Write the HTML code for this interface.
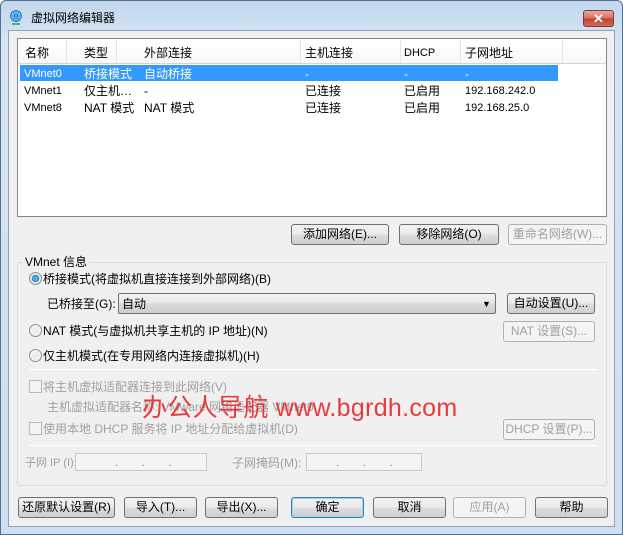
<!DOCTYPE html>
<html><head><meta charset="utf-8"><style>
*{margin:0;padding:0;box-sizing:border-box}
body{width:623px;height:535px;overflow:hidden;font-family:"Liberation Sans","Noto Sans CJK SC",sans-serif;font-size:12px;color:#000;background:#fff}
.win{position:absolute;left:0;top:0;width:623px;height:535px;background:linear-gradient(#c2d7ee,#d6e4f3 40px,#cfdff0);border:1px solid #58708c;border-radius:6px 6px 0 0}
.client{position:absolute;left:8px;top:30px;width:607px;height:497px;background:#f0f0f0;border:1px solid #8da2bb}
.a{position:absolute;white-space:nowrap;line-height:16px}
.btn{position:absolute;height:21px;border:1px solid #707070;border-radius:3px;background:linear-gradient(#f2f2f2,#ebebeb 50%,#dddddd 51%,#cfcfcf);text-align:center;line-height:19px;font-size:12px}
.dis{border-color:#adb2b5;background:#f4f4f4;color:#a0a0a0}
.gray{color:#a0a0a0}
.radio{position:absolute;width:13px;height:13px;border-radius:50%;border:1px solid #8e8f8f;background:radial-gradient(#e8e8e8,#f8f8f8)}
.chk{position:absolute;width:13px;height:13px;border:1px solid #b8b8b8;background:#f4f4f4}
.sep{position:absolute;height:1px;background:#a0a0a0;border-bottom:1px solid #fff}
.inp{position:absolute;height:18px;border:1px solid #c8c8c8;background:#f4f4f4}
.s{font-size:11px}
</style></head><body>
<div class="win">
<svg class="a" style="left:7px;top:8px" width="16" height="16" viewBox="0 0 16 16"><circle cx="8" cy="7" r="5.5" fill="#7ec0ea" stroke="#2a7fc0"/><path d="M2.5 7h11M8 1.5v11M5 3c2 2 2 6 0 8M11 3c-2 2-2 6 0 8" stroke="#2a7fc0" fill="none" stroke-width=".8"/><path d="M4 15h8" stroke="#1aa060" stroke-width="1.5"/></svg>
<div class="a" style="left:30px;top:9px;font-size:12px">虚拟网络编辑器</div>
<div class="a" style="left:582px;top:9px;width:31px;height:17px;border:1px solid #7a3b34;border-radius:3px;background:linear-gradient(#e8a99c,#d2705f 50%,#c2412c 51%,#d46a52);color:#fff;text-align:center;font-weight:bold;font-size:13px;line-height:15px">✕</div>
</div>
<div class="client"></div>
<div class="a" style="left:17px;top:38px;width:590px;height:179px;border:1px solid #828790;background:#fff"></div>
<div class="a" style="left:18px;top:39px;width:588px;height:25px;background:linear-gradient(#fff,#f7f8fa);border-bottom:1px solid #d5d5d5"></div>
<div class="a" style="left:66px;top:40px;width:1px;height:23px;background:#e3e5e7"></div>
<div class="a" style="left:116px;top:40px;width:1px;height:23px;background:#e3e5e7"></div>
<div class="a" style="left:300px;top:40px;width:1px;height:23px;background:#e3e5e7"></div>
<div class="a" style="left:400px;top:40px;width:1px;height:23px;background:#e3e5e7"></div>
<div class="a" style="left:460px;top:40px;width:1px;height:23px;background:#e3e5e7"></div>
<div class="a" style="left:562px;top:40px;width:1px;height:23px;background:#e3e5e7"></div>
<div class="a" style="left:25px;top:45px">名称</div><div class="a" style="left:84px;top:45px">类型</div><div class="a" style="left:144px;top:45px">外部连接</div><div class="a" style="left:305px;top:45px">主机连接</div><div class="a s" style="left:404px;top:45px">DHCP</div><div class="a" style="left:465px;top:45px">子网地址</div>
<div class="a" style="left:20px;top:65px;width:538px;height:16px;background:#3399ff"></div>
<div class="a s" style="left:24px;top:66px;color:#fff">VMnet0</div><div class="a" style="left:84px;top:66px;color:#fff">桥接模式</div><div class="a" style="left:144px;top:66px;color:#fff">自动桥接</div><div class="a" style="left:305px;top:66px;color:#fff">-</div><div class="a" style="left:404px;top:66px;color:#fff">-</div><div class="a" style="left:465px;top:66px;color:#fff">-</div>
<div class="a s" style="left:24px;top:83px">VMnet1</div><div class="a" style="left:84px;top:83px">仅主机…</div><div class="a" style="left:144px;top:83px">-</div><div class="a" style="left:305px;top:83px">已连接</div><div class="a" style="left:404px;top:83px">已启用</div><div class="a s" style="left:465px;top:83px">192.168.242.0</div>
<div class="a s" style="left:24px;top:100px">VMnet8</div><div class="a" style="left:84px;top:100px">NAT 模式</div><div class="a" style="left:144px;top:100px">NAT 模式</div><div class="a" style="left:305px;top:100px">已连接</div><div class="a" style="left:404px;top:100px">已启用</div><div class="a s" style="left:465px;top:100px">192.168.25.0</div>
<div class="btn" style="left:291px;top:224px;width:98px">添加网络(E)...</div>
<div class="btn" style="left:399px;top:224px;width:100px">移除网络(O)</div>
<div class="btn dis" style="left:508px;top:224px;width:99px">重命名网络(W)...</div>
<div class="a" style="left:17px;top:262px;width:590px;height:224px;border:1px solid #d5dfe5;border-radius:3px"></div>
<div class="a" style="left:23px;top:254px;background:#f0f0f0;padding:0 2px">VMnet 信息</div>
<div class="radio" style="left:29px;top:272px;background:radial-gradient(#4fb0f0 0 2px,#1a6fb8 3px,#e8e8e8 4px)"></div>
<div class="a" style="left:43px;top:271px">桥接模式(将虚拟机直接连接到外部网络)(B)</div>
<div class="a" style="left:47px;top:296px">已桥接至(G):</div>
<div class="a" style="left:118px;top:293px;width:378px;height:21px;border:1px solid #707070;border-radius:2px;background:linear-gradient(#f2f2f2,#e6e6e6 50%,#dadada 51%,#cfcfcf)"></div>
<div class="a" style="left:122px;top:296px">自动</div>
<div class="a" style="left:482px;top:296px;font-size:9px">▼</div>
<div class="btn" style="left:507px;top:293px;width:88px">自动设置(U)...</div>
<div class="radio" style="left:29px;top:324px"></div>
<div class="a" style="left:43px;top:323px">NAT 模式(与虚拟机共享主机的 IP 地址)(N)</div>
<div class="btn dis" style="left:503px;top:321px;width:92px">NAT 设置(S)...</div>
<div class="radio" style="left:29px;top:349px"></div>
<div class="a" style="left:43px;top:348px">仅主机模式(在专用网络内连接虚拟机)(H)</div>
<div class="sep" style="left:29px;top:369px;width:568px"></div>
<div class="chk" style="left:29px;top:380px"></div>
<div class="a gray" style="left:43px;top:379px">将主机虚拟适配器连接到此网络(V)</div>
<div class="a gray" style="left:47px;top:399px">主机虚拟适配器名称: VMware 网络适配器 VMnet0</div>
<div class="chk" style="left:29px;top:422px"></div>
<div class="a gray" style="left:43px;top:421px">使用本地 DHCP 服务将 IP 地址分配给虚拟机(D)</div>
<div class="btn dis" style="left:503px;top:419px;width:92px">DHCP 设置(P)...</div>
<div class="sep" style="left:29px;top:445px;width:568px"></div>
<div class="a gray" style="left:25px;top:455px;font-size:11px">子网 IP (I):</div>
<div class="inp" style="left:75px;top:453px;width:132px"></div>
<div class="a gray" style="left:195px;top:455px;left:232px">子网掩码(M):</div>
<div class="inp" style="left:306px;top:453px;width:116px"></div>
<div class="a" style="left:115px;top:454px;color:#888">.&nbsp;&nbsp;&nbsp;&nbsp;&nbsp;&nbsp;&nbsp;.&nbsp;&nbsp;&nbsp;&nbsp;&nbsp;&nbsp;&nbsp;.</div>
<div class="a" style="left:336px;top:454px;color:#888">.&nbsp;&nbsp;&nbsp;&nbsp;&nbsp;&nbsp;&nbsp;.&nbsp;&nbsp;&nbsp;&nbsp;&nbsp;&nbsp;&nbsp;.</div>
<div class="a" style="left:142px;top:393px;color:#e8282a;font-size:25px;line-height:30px;letter-spacing:.3px;opacity:.9">办公人导航 www.bgrdh.com</div>
<div class="btn" style="left:18px;top:497px;width:97px">还原默认设置(R)</div>
<div class="btn" style="left:124px;top:497px;width:73px">导入(T)...</div>
<div class="btn" style="left:205px;top:497px;width:73px">导出(X)...</div>
<div class="btn" style="left:291px;top:497px;width:73px;border-color:#3c7fb1;box-shadow:inset 0 0 0 1px #97d3f3">确定</div>
<div class="btn" style="left:373px;top:497px;width:73px">取消</div>
<div class="btn dis" style="left:453px;top:497px;width:73px">应用(A)</div>
<div class="btn" style="left:535px;top:497px;width:73px">帮助</div>
</body></html>
